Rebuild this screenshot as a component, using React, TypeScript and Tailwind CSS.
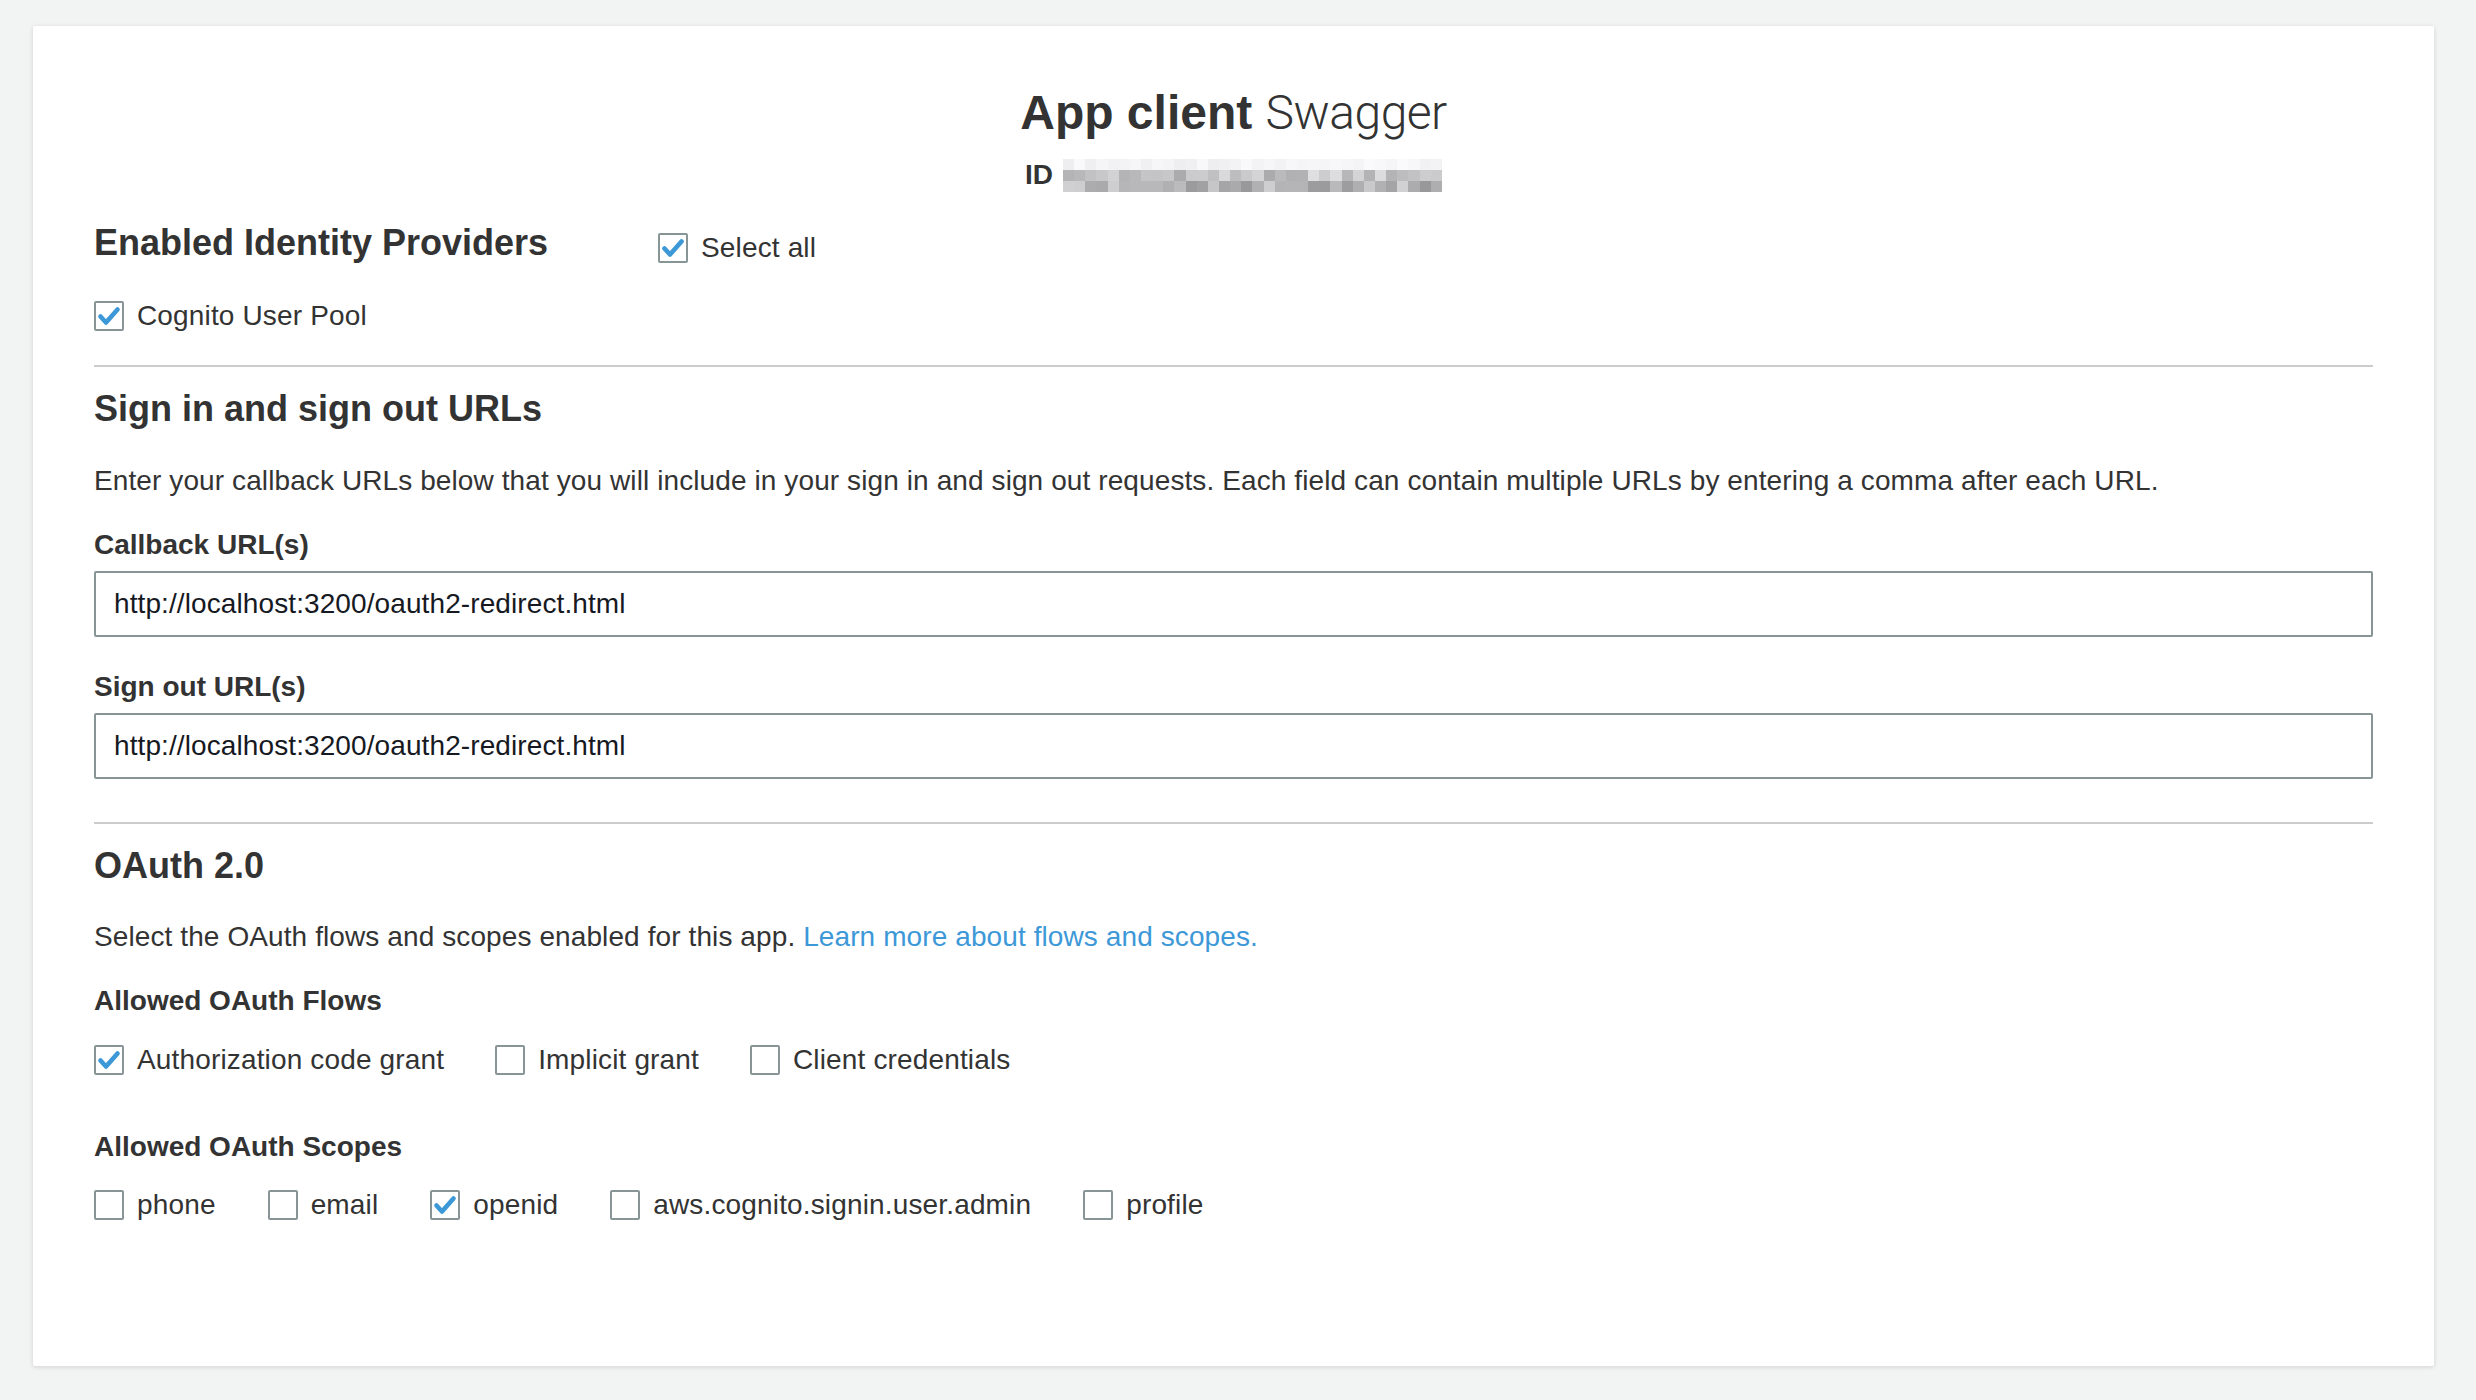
import React from 'react'

// pixelated "redacted" id, the way the screenshot shows it
const mosaicCols = 34
const shade = (row: number, col: number) => {
  const n = Math.abs(Math.sin(col * 12.9898 + row * 78.233) * 43758.5453) % 1
  if (row === 0) return 238 + Math.round(n * 12)
  if (row === 1) return 170 + Math.round(n * 55)
  return 150 + Math.round(n * 60)
}

const IdMosaic = () => (
  <div className="flex flex-col w-[379px] h-[33px] blur-[0.6px]">
    {[0, 1, 2].map((row) => (
      <div key={row} className="flex flex-1">
        {Array.from({ length: mosaicCols }).map((_, col) => {
          const v = shade(row, col)
          return <div key={col} className="flex-1" style={{ backgroundColor: `rgb(${v},${v},${v + 2})` }} />
        })}
      </div>
    ))}
  </div>
)

interface CheckboxProps {
  label: string
  checked?: boolean
}

const Checkbox = ({ label, checked }: CheckboxProps) => (
  <label className="flex items-center h-[30px]">
    <span className="w-[30px] h-[30px] border-2 border-[#879596] rounded-[2px] bg-white flex items-center justify-center shrink-0">
      {checked && (
        <svg width="26" height="26" viewBox="0 0 26 26">
          <path d="M4.5 13.5 L10 19.5 L21.5 6.5" fill="none" stroke="#3d98d8" strokeWidth="4.6" strokeLinecap="round" strokeLinejoin="round" />
        </svg>
      )}
    </span>
    <span className="ml-[13px] text-[28px] leading-[32px] tracking-[0.15px] text-[#333]">{label}</span>
  </label>
)

const SectionTitle = ({ children }: { children: React.ReactNode }) => (
  <h2 className="text-[36px] leading-[40px] font-bold text-[#333]">{children}</h2>
)

const FieldLabel = ({ children }: { children: React.ReactNode }) => (
  <p className="text-[28px] leading-[32px] font-bold text-[#333]">{children}</p>
)

const UrlInput = ({ value }: { value: string }) => (
  <input
    type="text"
    readOnly
    value={value}
    className="mt-[10px] w-full h-[66px] border-2 border-[#879596] rounded-[2px] pl-[18px] text-[28px] tracking-[0.1px] text-[#16191f] outline-none bg-white"
  />
)

export default function App() {
  const redirect = 'http://localhost:3200/oauth2-redirect.html'

  return (
    <div className="min-h-screen bg-[#f2f3f3] pt-[26px] pl-[33px] pr-[42px] pb-[34px] font-['Liberation_Sans',Arial,sans-serif]">
      <div className="h-[1340px] bg-white rounded-[2px] shadow-[0_1px_5px_rgba(0,0,0,0.14)] px-[61px] pt-[59px]">
        {/* header */}
        <div className="flex flex-col items-center">
          <h1 className="text-[48px] leading-[56px] text-[#333]">
            <span className="font-bold">App client</span>{' '}
            <span className="font-['Roboto','Liberation_Sans',sans-serif] font-light tracking-[-0.5px]">Swagger</span>
          </h1>
          <div className="mt-[17px] flex items-center gap-[10px]">
            <span className="text-[28px] leading-[34px] font-bold text-[#333]">ID</span>
            <IdMosaic />
          </div>
        </div>

        {/* identity providers */}
        <div className="mt-[31px] flex items-start">
          <div className="w-[564px]">
            <SectionTitle>Enabled Identity Providers</SectionTitle>
          </div>
          <div className="mt-[10px]">
            <Checkbox label="Select all" checked />
          </div>
        </div>
        <div className="mt-[38px]">
          <Checkbox label="Cognito User Pool" checked />
        </div>

        <div className="mt-[34px] h-[2px] bg-[#cccccc]" />

        {/* urls */}
        <div className="mt-[22px]">
          <SectionTitle>Sign in and sign out URLs</SectionTitle>
        </div>
        <p className="mt-[36px] text-[28px] leading-[32px] tracking-[0.1px] text-[#333]">
          Enter your callback URLs below that you will include in your sign in and sign out requests. Each field can contain multiple URLs by entering a comma after each URL.
        </p>
        <div className="mt-[32px]">
          <FieldLabel>Callback URL(s)</FieldLabel>
          <UrlInput value={redirect} />
        </div>
        <div className="mt-[34px]">
          <FieldLabel>Sign out URL(s)</FieldLabel>
          <UrlInput value={redirect} />
        </div>

        <div className="mt-[43px] h-[2px] bg-[#cccccc]" />

        {/* oauth */}
        <div className="mt-[22px]">
          <SectionTitle>OAuth 2.0</SectionTitle>
        </div>
        <p className="mt-[35px] text-[28px] leading-[32px] tracking-[0.1px] text-[#333]">
          Select the OAuth flows and scopes enabled for this app.{' '}
          <a href="#" className="text-[#3d98d8]">Learn more about flows and scopes.</a>
        </p>

        <div className="mt-[32px]">
          <FieldLabel>Allowed OAuth Flows</FieldLabel>
        </div>
        <div className="mt-[28px] flex items-center gap-[51px]">
          <Checkbox label="Authorization code grant" checked />
          <Checkbox label="Implicit grant" />
          <Checkbox label="Client credentials" />
        </div>

        <div className="mt-[56px]">
          <FieldLabel>Allowed OAuth Scopes</FieldLabel>
        </div>
        <div className="mt-[27px] flex items-center gap-[52px]">
          <Checkbox label="phone" />
          <Checkbox label="email" />
          <Checkbox label="openid" checked />
          <Checkbox label="aws.cognito.signin.user.admin" />
          <Checkbox label="profile" />
        </div>
      </div>
    </div>
  )
}
